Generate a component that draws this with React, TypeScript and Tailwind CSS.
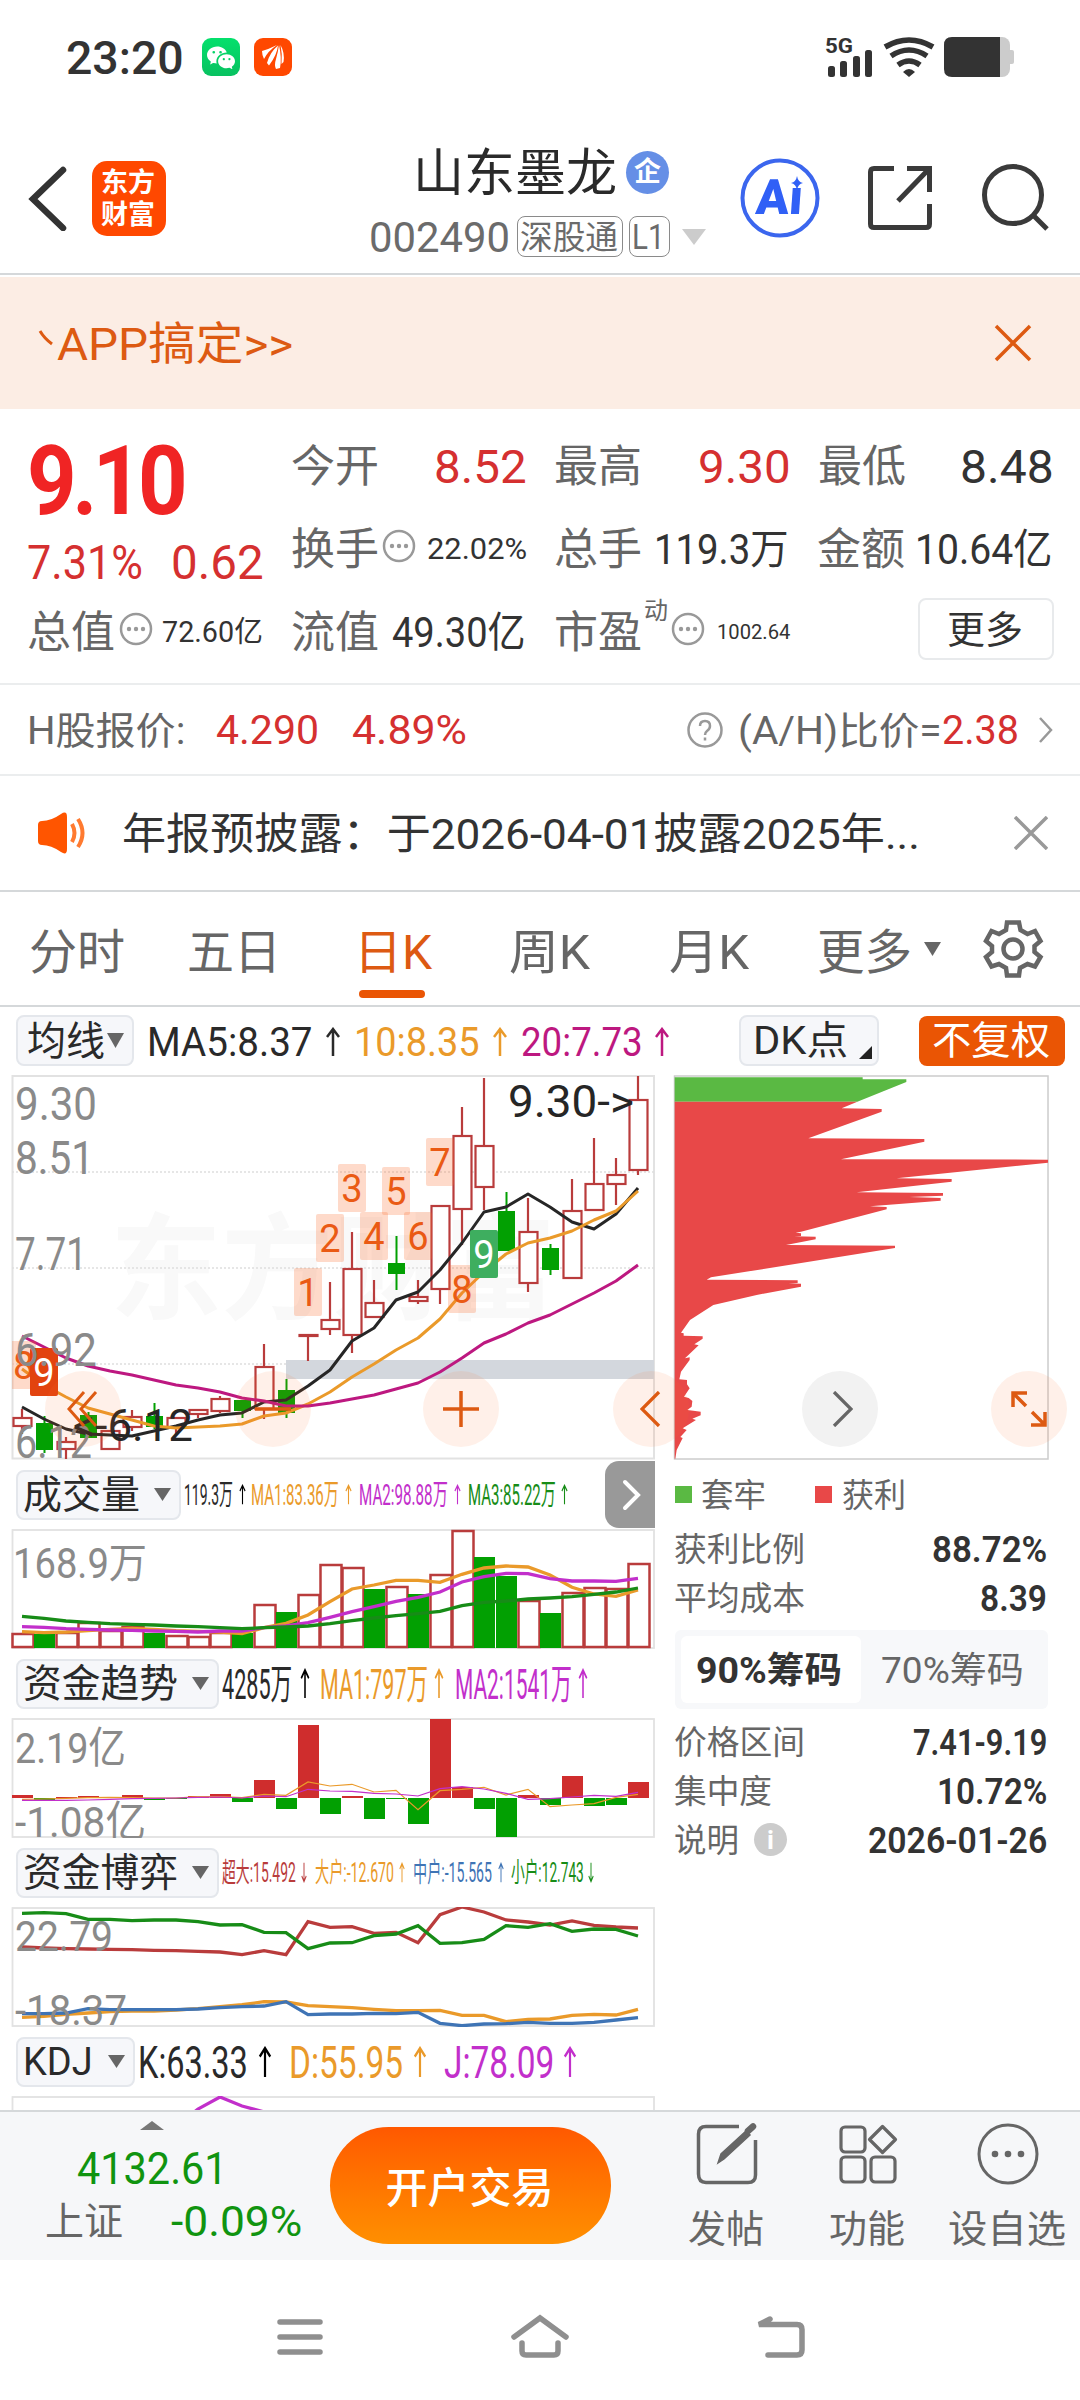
// App.tsx
//
// Stock detail page: quote header, daily K chart, indicator panes and chip distribution.

import { useLayoutEffect, useRef, useState } from "react"
import type { ReactNode } from "react"
import { BsWechat } from "react-icons/bs"

// Single line text that is squeezed (or stretched) to the width of its box.
function Fit({ className = "", children }: { className?: string; children: ReactNode }) {
  const box = useRef<HTMLSpanElement>(null)
  const inner = useRef<HTMLSpanElement>(null)
  const [k, setK] = useState(1)

  useLayoutEffect(() => {
    if (!box.current || !inner.current) return
    setK(box.current.clientWidth / inner.current.offsetWidth)
  }, [children])

  return (
    <span ref={box} className={`block shrink-0 leading-none ${className}`}>
      <span
        ref={inner}
        className="block w-max origin-left whitespace-nowrap"
        style={{ transform: `translate(-1px, 1px) scaleX(${k})` }}
      >
        {children}
      </span>
    </span>
  )
}

const X0 = 22
const STEP = 22

// one y value per candle
function line(ys: number[], base = 0, div = 1) {
  return ys.map((y, i) => `${X0 + i * STEP},${(base + y / div).toFixed(1)}`).join(" ")
}

// [high, body top, body bottom, low, up?]
const CANDLES: [number, number, number, number, boolean][] = [
  [1409, 1418, 1426, 1434, true],
  [1416, 1423, 1450, 1453, false],
  [1437, 1442, 1449, 1459, true],
  [1412, 1415, 1438, 1438, false],
  [1431, 1431, 1449, 1449, true],
  [1410, 1417, 1427, 1431, true],
  [1403, 1416, 1427, 1429, false],
  [1418, 1418, 1427, 1435, true],
  [1410, 1410, 1414, 1418, true],
  [1396, 1399, 1411, 1413, true],
  [1400, 1400, 1411, 1418, false],
  [1344, 1367, 1409, 1419, true],
  [1379, 1390, 1413, 1418, false],
  [1335, 1335, 1336, 1361, true],
  [1282, 1320, 1329, 1335, true],
  [1232, 1269, 1335, 1353, true],
  [1280, 1303, 1317, 1318, true],
  [1236, 1263, 1274, 1290, false],
  [1280, 1297, 1301, 1304, true],
  [1206, 1206, 1289, 1304, true],
  [1107, 1136, 1209, 1245, true],
  [1078, 1146, 1187, 1210, true],
  [1192, 1211, 1251, 1251, false],
  [1198, 1232, 1283, 1292, true],
  [1244, 1248, 1270, 1275, false],
  [1179, 1211, 1278, 1278, true],
  [1138, 1184, 1210, 1210, true],
  [1158, 1175, 1184, 1205, true],
  [1076, 1100, 1170, 1175, true],
]

const MA5 = [1407, 1419, 1429, 1434, 1435, 1436, 1431, 1426, 1420, 1415, 1413, 1402, 1400, 1386, 1370, 1341, 1328, 1300, 1292, 1270, 1243, 1212, 1207, 1194, 1207, 1222, 1229, 1214, 1188]
const MA10 = [1369, 1385, 1397, 1408, 1414, 1420, 1426, 1428, 1427, 1426, 1424, 1416, 1413, 1404, 1392, 1377, 1364, 1350, 1338, 1319, 1293, 1272, 1254, 1243, 1238, 1231, 1220, 1211, 1191]
const MA20 = [1336, 1347, 1358, 1366, 1371, 1375, 1380, 1385, 1388, 1392, 1398, 1401, 1406, 1406, 1403, 1399, 1395, 1389, 1383, 1372, 1358, 1343, 1334, 1323, 1315, 1304, 1293, 1281, 1265]

const COUNTS: [string, number, number][] = [
  ["1", 294, 1268],
  ["2", 316, 1214],
  ["3", 338, 1164],
  ["4", 360, 1212],
  ["5", 382, 1167],
  ["6", 404, 1212],
  ["7", 426, 1138],
  ["8", 448, 1265],
]

const VOL_TOP = [1633, 1634, 1632, 1622, 1630, 1626, 1633, 1635, 1636, 1632, 1633, 1604, 1612, 1594, 1564, 1567, 1589, 1586, 1594, 1574, 1530, 1557, 1576, 1600, 1613, 1592, 1587, 1588, 1563]
const VOL_DOWN = [1, 6, 10, 12, 16, 18, 21, 22, 24]
const VOL_MA1 = [515, 518, 516, 512, 508, 505, 508, 512, 514, 516, 521, 503, 490, 465, 425, 387, 375, 361, 361, 367, 343, 324, 318, 321, 345, 382, 402, 409, 390]
const VOL_MA2 = [500, 502, 506, 508, 510, 511, 513, 514, 516, 513, 513, 503, 498, 488, 472, 455, 440, 424, 412, 396, 366, 350, 340, 341, 356, 363, 363, 364, 355]
const VOL_MA3 = [469, 475, 483, 487, 491, 493, 495, 498, 500, 503, 506, 503, 501, 498, 491, 482, 474, 467, 461, 454, 437, 427, 423, 417, 414, 410, 403, 396, 384]

const ZERO = 1798
const FLOW = [1795, 1801, 1797, 1796, 1797, 1795, 1800, 1799, 1796, 1794, 1802, 1780, 1809, 1725, 1814, 1796, 1819, 1799, 1824, 1719, 1787, 1809, 1837, 1795, 1805, 1776, 1806, 1805, 1782]
const FLOW_MA1 = [1018, 1017, 1015, 1013, 1012, 1013, 1014, 1014, 1010, 1010, 1013, 1003, 1006, 966, 978, 973, 996, 991, 1049, 992, 988, 982, 1005, 988, 1040, 1035, 1031, 1012, 1003]
const FLOW_MA2 = [1021, 1021, 1021, 1020, 1018, 1016, 1015, 1014, 1012, 1011, 1014, 1008, 1010, 988, 993, 994, 1000, 1002, 1008, 986, 980, 987, 1000, 1018, 1016, 1011, 1006, 1009, 997]

const GAME_SMALL = [250, 248, 251, 268, 268, 272, 270, 270, 275, 285, 284, 307, 308, 356, 339, 338, 317, 312, 287, 340, 338, 328, 287, 292, 281, 304, 297, 298, 318]
const GAME_HUGE = [351, 354, 356, 357, 358, 359, 361, 362, 364, 366, 374, 362, 374, 275, 292, 290, 310, 307, 338, 254, 231, 246, 270, 276, 285, 273, 286, 291, 294]
const GAME_BIG = [562, 559, 553, 549, 545, 543, 543, 540, 536, 530, 524, 515, 516, 527, 530, 533, 538, 542, 542, 541, 556, 556, 575, 568, 567, 556, 553, 555, 538]
const GAME_MID = [551, 551, 549, 536, 539, 539, 539, 539, 537, 533, 530, 528, 515, 554, 552, 552, 550, 551, 547, 580, 587, 582, 581, 577, 580, 580, 577, 570, 563]

// outline of the chip distribution, x and y in thirds of a pixel
const CHIPS =
  "74,95 622,95 575,115 695,117 695,125 475,205 823,207 823,215 573,268 1194,269 1194,278 740,325 905,327 905,335 620,367 879,369 879,377 778,381 872,384 872,392 660,409 710,411 710,418 453,485 437,488 453,490 453,498 432,499 497,500 497,508 408,525 735,527 735,534 183,622 170,629 443,631 443,639 415,640 453,641 453,650 320,675 190,705 120,750 93,788 101,790 101,797 158,799 158,806 133,823 146,826 105,865 119,862 119,870 93,905 88,928 111,930 111,943 119,955 102,980 116,984 127,993 125,1010 112,1020 130,1022 152,1025 152,1036 127,1046 138,1050 98,1075 110,1080 91,1101 98,1104 80,1140 76,1166 74,1166"

function StatusBar() {
  return (
    <div className="flex h-[114px] items-center pl-[67px]">
      <Fit className="w-[118px] text-[46px] font-medium text-[#333]">23:20</Fit>
      <div className="ml-[17px] flex h-[38px] w-[38px] items-center justify-center rounded-[9px] bg-gradient-to-b from-[#04e06c] to-[#08c160]">
        <BsWechat className="h-[28px] w-[28px] text-white" />
      </div>
      <svg className="ml-[14px] h-[38px] w-[38px]" viewBox="0 0 38 38">
        <rect width="38" height="38" rx="9" fill="#ff4800" />
        <path d="M8 13Q15 11 23 7Q14 13 10 21Q8 17 8 13zM13 25Q16 14 24 7.500Q23 17 15 27.500zM22 31Q20 27 22 21Q24 14 25 7Q28 20 26 30zM26.500 7Q31 15 29.500 24L27.500 26Q28.500 16 26.500 7z" fill="#fff" />
      </svg>
      <svg className="ml-[530px] h-[44px] w-[192px]" viewBox="822 35 192 44">
        <text x="825" y="53" fontSize="20" fontWeight="700" fill="#333" textLength="28" lengthAdjust="spacingAndGlyphs">5G</text>
        <g fill="#333">
          <rect x="828" y="66" width="7" height="11" rx="2.5" />
          <rect x="840" y="61" width="7" height="16" rx="2.5" />
          <rect x="853" y="56" width="7" height="21" rx="2.5" />
          <rect x="865" y="50" width="7" height="27" rx="2.5" />
          <path d="M909 77l-6-5q6-6 12 0z" />
        </g>
        <g fill="none" stroke="#333" strokeWidth="5.5">
          <path d="M885 47q24-14 48 0" />
          <path d="M891 56q18-12 36 0" />
          <path d="M898 65q11-8 22 0" />
        </g>
        <rect x="985" y="37" width="25" height="40" rx="8" fill="#ccc" />
        <rect x="1008" y="50" width="6" height="14" rx="2" fill="#ccc" />
        <path d="M952 37h48v40h-48q-8 0-8-8v-24q0-8 8-8z" fill="#333" />
      </svg>
    </div>
  )
}

function Header() {
  return (
    <header className="flex h-[161px] items-center border-b-2 border-[#d5d8da] pb-[9px]">
      <svg className="ml-[26px] mt-[17px] h-[66px] w-[44px]" viewBox="26 166 44 66" fill="none" stroke="#333" strokeWidth="6.500">
        <path d="M63 171L33 200L63 229" strokeLinecap="round" />
      </svg>
      <div className="ml-[22px] mt-[19px] flex h-[75px] w-[74px] flex-col items-center justify-center gap-[5px] rounded-[15px] bg-[#ff4800] font-bold text-white">
        <Fit className="w-[54px] text-[27px]">东方</Fit>
        <Fit className="w-[54px] text-[27px]">财富</Fit>
      </div>
      <div className="ml-[204px] mt-[27px] w-[340px]">
        <div className="flex items-center pl-[44px]">
          <Fit className="w-[204px] text-[51px] text-[#2a2a2a]">山东墨龙</Fit>
          <span className="ml-[8px] flex h-[43px] w-[43px] items-center justify-center rounded-full bg-[#658fe6] text-[27px] font-bold leading-none text-white">企</span>
        </div>
        <div className="mt-[17px] flex items-center text-[#6b6b6b]">
          <Fit className="w-[141px] text-[43px]">002490</Fit>
          <span className="ml-[6px] flex h-[41px] w-[106px] items-center justify-center rounded-[8px] border-[1.5px] border-[#8a8a8a]">
            <Fit className="w-[98px] text-[33px]">深股通</Fit>
          </span>
          <span className="ml-[6px] flex h-[41px] w-[41px] items-center justify-center rounded-[8px] border-[1.5px] border-[#8a8a8a]">
            <Fit className="w-[33px] text-[35px]">L1</Fit>
          </span>
          <svg className="ml-[12px] h-[16px] w-[24px]" viewBox="0 0 24 16">
            <path d="M0 0h24L12 16z" fill="#ccc" />
          </svg>
        </div>
      </div>
      <svg className="ml-[29px] mt-[18px] h-[82px] w-[82px]" viewBox="739 158 82 82">
        <circle cx="780" cy="199" r="37.5" fill="none" stroke="#3b66ee" strokeWidth="4" />
        <path d="M797 177q1 6 6 7q-5 1-6 7q-1-6-6-7q5-1 6-7z" fill="#3060f6" />
        <text transform="translate(755 215) skewX(-4)" fontSize="49" fontWeight="900" fill="#3060f6" textLength="47" lengthAdjust="spacingAndGlyphs">Aı</text>
      </svg>
      <svg className="ml-[44px] mt-[17px] h-[70px] w-[72px]" viewBox="864 164 72 70" fill="none" stroke="#3a3a3a" strokeWidth="5">
        <path d="M893 169.500H873q-3.500 0-3.500 3.500V225q0 3.500 3.500 3.500H925q3.500 0 3.500-3.500V205M906 169.500H928.500V193M927 171L897 202" />
      </svg>
      <svg className="ml-[42px] mt-[17px] h-[70px] w-[72px]" viewBox="978 164 72 70" fill="none" stroke="#3a3a3a" strokeWidth="5">
        <circle cx="1012" cy="196" r="28.500" />
        <path d="M1032 216L1046 230" />
      </svg>
    </header>
  )
}

function Dots() {
  return (
    <svg className="h-[34px] w-[34px] shrink-0" viewBox="0 0 34 34">
      <circle cx="17" cy="17" r="15" fill="none" stroke="#999" strokeWidth="2.500" />
      <g fill="#999">
        <circle cx="10" cy="17" r="2.200" />
        <circle cx="17" cy="17" r="2.200" />
        <circle cx="24" cy="17" r="2.200" />
      </g>
    </svg>
  )
}

function Quote() {
  return (
    <section className="h-[276px] border-b-2 border-[#ebedee] pt-[15px] text-[#666]">
      <div className="flex">
        <div className="w-[292px] pl-[28px]">
          <div className="flex h-[110px] items-center pt-[2px]">
            <Fit className="w-[156px] text-[96px] font-bold tracking-[-5px] text-[#f02424]">9.10</Fit>
          </div>
          <div className="flex h-[56px] items-center text-[48px] text-[#d53030]">
            <Fit className="w-[116px]">7.31%</Fit>
            <Fit className="ml-[28px] w-[93px]">0.62</Fit>
          </div>
        </div>
        <div className="flex flex-col">
          <div className="flex h-[83px] items-center text-[44px]">
            <Fit className="w-[88px]">今开</Fit>
            <Fit className="ml-[55px] w-[93px] text-[47px] text-[#d53030]">8.52</Fit>
            <Fit className="ml-[27px] w-[88px]">最高</Fit>
            <Fit className="ml-[56px] w-[93px] text-[47px] text-[#d53030]">9.30</Fit>
            <Fit className="ml-[27px] w-[88px]">最低</Fit>
            <Fit className="ml-[54px] w-[94px] text-[47px] text-[#333]">8.48</Fit>
          </div>
          <div className="flex h-[83px] items-center text-[44px]">
            <Fit className="w-[88px]">换手</Fit>
            <span className="ml-[2px] flex pb-[6px]"><Dots /></span>
            <Fit className="ml-[12px] w-[100px] text-[29px] text-[#333]">22.02%</Fit>
            <Fit className="ml-[27px] w-[88px]">总手</Fit>
            <Fit className="ml-[12px] w-[135px] text-[42px] text-[#333]">119.3万</Fit>
            <Fit className="ml-[28px] w-[88px]">金额</Fit>
            <Fit className="ml-[10px] w-[138px] text-[42px] text-[#333]">10.64亿</Fit>
          </div>
        </div>
      </div>
      <div className="flex h-[83px] items-center pl-[28px] text-[44px]">
        <Fit className="w-[88px]">总值</Fit>
        <span className="ml-[3px] flex pb-[6px]"><Dots /></span>
        <Fit className="ml-[10px] w-[101px] text-[29px] text-[#333]">72.60亿</Fit>
        <Fit className="ml-[28px] w-[88px]">流值</Fit>
        <Fit className="ml-[13px] w-[134px] text-[42px] text-[#333]">49.30亿</Fit>
        <Fit className="ml-[28px] w-[88px]">市盈</Fit>
        <Fit className="mb-[44px] ml-[2px] w-[24px] text-[24px]">动</Fit>
        <span className="ml-[2px] flex pb-[6px]"><Dots /></span>
        <Fit className="ml-[13px] w-[73px] text-[21px] text-[#333]">1002.64</Fit>
        <button className="mb-[5px] ml-[127px] flex h-[62px] w-[136px] items-center justify-center rounded-[8px] border-2 border-[#e8eaec]">
          <Fit className="w-[76px] text-[38px] text-[#333]">更多</Fit>
        </button>
      </div>
    </section>
  )
}

function HShare() {
  return (
    <section className="flex h-[91px] items-center border-b-2 border-[#ebedee] text-[38px] text-[#666]">
      <Fit className="ml-[28px] w-[158px]">H股报价:</Fit>
      <Fit className="ml-[31px] w-[103px] text-[41px] text-[#d53030]">4.290</Fit>
      <Fit className="ml-[33px] w-[115px] text-[41px] text-[#d53030]">4.89%</Fit>
      <svg className="ml-[218px] h-[38px] w-[38px]" viewBox="0 0 38 38" fill="none" stroke="#999" strokeWidth="2.500">
        <circle cx="19" cy="19" r="16.500" />
        <path d="M14 15q0-5 5-5t5 5q0 3-3 5q-2 1.500-2 4M19 26.500v3" />
      </svg>
      <Fit className="ml-[15px] w-[204px]">(A/H)比价=</Fit>
      <Fit className="w-[77px] text-[41px] text-[#d53030]">2.38</Fit>
      <svg className="ml-[18px] h-[30px] w-[16px]" viewBox="0 0 16 30" fill="none" stroke="#999" strokeWidth="2.500">
        <path d="M2 3L13 15L2 27" />
      </svg>
    </section>
  )
}

function Notice() {
  return (
    <section className="flex h-[116px] items-center border-b-2 border-[#d5d8da]">
      <svg className="ml-[34px] h-[46px] w-[54px]" viewBox="34 810 54 46">
        <path d="M42 821Q51 821 61 814q6-4 6 3v32q0 7-6 3Q51 845 42 845q-4 0-4-4v-16q0-4 4-4z" fill="#ff5500" />
        <path d="M72 824q5 9 0 18M78 819q9 14 0 28" fill="none" stroke="#ff7a30" strokeWidth="4" />
      </svg>
      <Fit className="ml-[35px] w-[798px] text-[43px] text-[#333]">年报预披露：于2026-04-01披露2025年...</Fit>
      <svg className="ml-[93px] h-[34px] w-[34px]" viewBox="0 0 34 34" stroke="#999" strokeWidth="3.500">
        <path d="M1 1L33 33M33 1L1 33" />
      </svg>
    </section>
  )
}

function Tabs() {
  return (
    <nav className="flex h-[115px] items-center border-b-2 border-[#d5d8da] text-[48px] text-[#666]">
      <Fit className="ml-[30px] mt-[6px] w-[96px]">分时</Fit>
      <Fit className="ml-[62px] mt-[6px] w-[94px]">五日</Fit>
      <span className="ml-[73px] flex h-full flex-col items-center pt-[36px] text-[#dd5a12]">
        <Fit className="w-[78px]">日K</Fit>
        <span className="mt-[14px] h-[8px] w-[66px] -translate-x-[2px] rounded-full bg-[#ea5504]" />
      </span>
      <Fit className="ml-[77px] mt-[6px] w-[81px]">周K</Fit>
      <Fit className="ml-[79px] mt-[6px] w-[80px]">月K</Fit>
      <Fit className="ml-[68px] mt-[6px] w-[95px]">更多</Fit>
      <svg className="ml-[11px] h-[14px] w-[17px]" viewBox="0 0 17 14">
        <path d="M0 0h17L8.500 14z" fill="#666" />
      </svg>
      <svg className="ml-[30px] mt-[2px] h-[90px] w-[90px]" viewBox="1 0 90 90" fill="none" stroke="#666" strokeWidth="4.500">
        <path d="M37 17.500H49L50.500 25L57.500 29L65 26L70.500 36L64.500 41V47L70.500 52L65 61.500L57.500 59L50 63L49 70.500H37L36 63L29 59L21.500 61.500L16 52L22 47V41L16 36L21.500 26L29 29L36 25Z" />
        <circle cx="43" cy="44" r="9.500" />
      </svg>
    </nav>
  )
}

function Arrow({ className = "", down = false }: { className?: string; down?: boolean }) {
  return (
    <svg className={`shrink-0 ${className}`} viewBox="0 0 16 30" preserveAspectRatio="none" fill="none" stroke="currentColor" strokeWidth="2.500">
      {down ? <path d="M8 1V28M2 20L8 28L14 20" /> : <path d="M8 29V2M2 10L8 2L14 10" />}
    </svg>
  )
}

function MaBar() {
  return (
    <div className="flex h-[67px] items-center text-[40px] text-[#2a2a2a]">
      <button className="ml-[16px] flex h-[51px] w-[118px] items-center rounded-[8px] border-2 border-[#e4e7ec] bg-[#f6f7fa] pl-[10px]">
        <Fit className="w-[78px]">均线</Fit>
        <svg className="ml-[1px] h-[15px] w-[17px]" viewBox="0 0 17 15">
          <path d="M0 0h17L8.500 15z" fill="#666" />
        </svg>
      </button>
      <Fit className="ml-[14px] mt-[3px] w-[166px]">MA5:8.37</Fit>
      <Arrow className="ml-[11px] mt-[3px] h-[30px] w-[16px]" />
      <Fit className="ml-[14px] mt-[3px] w-[126px] text-[#ea9a2a]">10:8.35</Fit>
      <Arrow className="ml-[11px] mt-[3px] h-[30px] w-[16px] text-[#ea9a2a]" />
      <Fit className="ml-[14px] mt-[3px] w-[122px] text-[#bd1880]">20:7.73</Fit>
      <Arrow className="ml-[10px] mt-[3px] h-[30px] w-[16px] text-[#bd1880]" />
      <button className="relative ml-[69px] flex h-[51px] w-[140px] items-center rounded-[8px] border-2 border-[#e4e7ec] bg-[#f6f7fa] pl-[13px]">
        <Fit className="w-[95px] text-[39px]">DK点</Fit>
        <svg className="absolute bottom-[5px] right-[5px] h-[13px] w-[13px]" viewBox="0 0 13 13">
          <path d="M13 0v13H0z" fill="#222" />
        </svg>
      </button>
      <button className="ml-[40px] flex h-[50px] w-[146px] items-center justify-center rounded-[8px] bg-[#ea5504] text-white">
        <Fit className="w-[118px] text-[39px]">不复权</Fit>
      </button>
    </div>
  )
}

function KChart() {
  return (
    <div className="relative h-[386px]">
      <svg className="block h-[387px] w-[1080px]" viewBox="0 1074 1080 387">
        <rect x="12.500" y="1076" width="641.500" height="382.500" fill="#fff" stroke="#e2e2e2" strokeWidth="2" />
        <text x="110" y="1310" fontSize="115" fontWeight="700" fill="#f9f9f9" textLength="446" lengthAdjust="spacingAndGlyphs">东方财富</text>
        <g stroke="#dedede" strokeWidth="1.500" strokeDasharray="2 2">
          <path d="M12 1172H654M12 1268H654M12 1364H654" />
        </g>
        <rect x="286" y="1360" width="368" height="19" fill="#d3d7dd" />

        {CANDLES.map(([hi, top, bottom, lo, up], i) => {
          const x = X0 + i * STEP
          return up ? (
            <g key={i} stroke="#b93c3c" strokeWidth="2.200" fill="#fff">
              <path d={`M${x} ${hi}V${top}M${x} ${bottom}V${lo}`} />
              <rect x={x - 8.500} y={top} width="18" height={bottom - top} fill={i === 13 ? "none" : "#fff"} />
            </g>
          ) : (
            <g key={i} fill="#02a002">
              <rect x={x - 0.500} y={hi} width="2" height={lo - hi} />
              <rect x={x - 8} y={top} width="17" height={bottom - top} />
            </g>
          )
        })}

        <g fill="none" strokeWidth="3" strokeLinejoin="round">
          <polyline points={line(MA5)} stroke="#262626" />
          <polyline points={line(MA10)} stroke="#ea9a2a" />
          <polyline points={line(MA20)} stroke="#bd1880" />
        </g>

        <g fontSize="38" fill="#ea5a14">
          {COUNTS.map(([n, x, y]) => (
            <g key={n}>
              <rect x={x} y={y} width="28" height="48" rx="2" fill="#fa6a2a" fillOpacity="0.250" />
              <text x={x + 14} y={y + 38} textAnchor="middle">{n}</text>
            </g>
          ))}
          <rect x="12" y="1341" width="24" height="48" fill="#fa6a2a" fillOpacity="0.250" />
          <text x="13" y="1379">8</text>
          <rect x="470" y="1230" width="28" height="48" rx="2" fill="#3eae5f" />
          <text x="484" y="1268" textAnchor="middle" fill="#fff">9</text>
          <rect x="30" y="1348" width="28" height="48" rx="2" fill="#e2430f" />
          <text x="44" y="1386" textAnchor="middle" fill="#fff">9</text>
        </g>

        <g fontSize="46" fill="#8a8a8a">
          <text x="15" y="1120" textLength="82" lengthAdjust="spacingAndGlyphs">9.30</text>
          <text x="15" y="1174" textLength="79" lengthAdjust="spacingAndGlyphs">8.51</text>
          <text x="15" y="1270" textLength="72" lengthAdjust="spacingAndGlyphs">7.71</text>
          <text x="15" y="1366" textLength="82" lengthAdjust="spacingAndGlyphs">6.92</text>
          <text x="15" y="1458" textLength="77" lengthAdjust="spacingAndGlyphs">6.12</text>
        </g>
        <g fontSize="45" fill="#262626">
          <text x="73" y="1441" textLength="120" lengthAdjust="spacingAndGlyphs">&lt;-6.12</text>
          <text x="508" y="1117" textLength="126" lengthAdjust="spacingAndGlyphs">9.30-&gt;</text>
        </g>

        <rect x="674.500" y="1076" width="373.500" height="383" fill="#fff" stroke="#ccc" strokeWidth="1.500" />
        <g transform="translate(650 1070) scale(0.33333)">
          <path d="M74 22H638V28H769V36L622 95H74z" fill="#5ab943" />
          <polygon points={CHIPS} fill="#e84848" />
        </g>
      </svg>

      {/* floating chart controls */}
      <button className="absolute left-[45px] top-[297px] flex h-[76px] w-[76px] items-center justify-center rounded-full bg-[#ff6a20]/10">
        <svg className="h-[36px] w-[32px]" viewBox="0 0 32 36" fill="none" stroke="#dd5a12" strokeWidth="3">
          <path d="M17 1L2 18L17 35M29 1L14 18L29 35" />
        </svg>
      </button>
      <button className="absolute left-[235px] top-[297px] flex h-[76px] w-[76px] items-center justify-center rounded-full bg-[#ff6a20]/10">
        <svg className="h-[4px] w-[36px]" viewBox="0 0 36 4">
          <path d="M0 2H36" stroke="#dd5a12" strokeWidth="3.500" />
        </svg>
      </button>
      <button className="absolute left-[423px] top-[297px] flex h-[76px] w-[76px] items-center justify-center rounded-full bg-[#ff6a20]/10">
        <svg className="h-[36px] w-[36px]" viewBox="0 0 36 36" stroke="#dd5a12" strokeWidth="3.500">
          <path d="M0 18H36M18 0V36" />
        </svg>
      </button>
      <button className="absolute left-[613px] top-[297px] flex h-[76px] w-[76px] items-center justify-center rounded-full bg-[#ff6a20]/10">
        <svg className="h-[36px] w-[22px]" viewBox="0 0 22 36" fill="none" stroke="#dd5a12" strokeWidth="3.300">
          <path d="M19 1L2 18L19 35" />
        </svg>
      </button>
      <button className="absolute left-[802px] top-[297px] flex h-[76px] w-[76px] items-center justify-center rounded-full bg-[#f2f2f2]">
        <svg className="ml-[4px] h-[36px] w-[22px]" viewBox="0 0 22 36" fill="none" stroke="#666" strokeWidth="3.300">
          <path d="M3 1L20 18L3 35" />
        </svg>
      </button>
      <button className="absolute left-[991px] top-[297px] flex h-[76px] w-[76px] items-center justify-center rounded-full bg-[#ff6a20]/10">
        <svg className="h-[38px] w-[38px]" viewBox="0 0 38 38" fill="none" stroke="#dd5a12" strokeWidth="3.500">
          <path d="M17 3H3V17M3 3L16 16M35 22V35H21M35 35L22 22" />
        </svg>
      </button>
    </div>
  )
}

function PaneSelect({ label, w, textW }: { label: string; w: string; textW: string }) {
  return (
    <button className={`ml-[16px] flex h-[50px] shrink-0 items-center justify-between rounded-[8px] border-2 border-[#e4e7ec] bg-[#f6f7fa] pl-[6px] pr-[8px] text-[39px] text-[#2a2a2a] ${w}`}>
      <Fit className={textW}>{label}</Fit>
      <svg className="h-[13px] w-[17px]" viewBox="0 0 17 13">
        <path d="M0 0h17L8.500 13z" fill="#666" />
      </svg>
    </button>
  )
}

function PaneFrame({ y, children }: { y: number; children: ReactNode }) {
  return (
    <svg className="block h-[120px] w-[660px]" viewBox={`0 ${y} 660 120`}>
      <rect x="12.500" y={y + 1} width="641.500" height="118" fill="#fff" stroke="#e2e2e2" strokeWidth="1.800" />
      {children}
    </svg>
  )
}

function VolumePane() {
  return (
    <>
      <div className="relative flex h-[69px] items-center">
        <PaneSelect label="成交量" w="w-[165px]" textW="w-[117px]" />
        <Fit className="ml-[4px] w-[49px] text-[29px] text-[#2a2a2a]">119.3万</Fit>
        <Arrow className="ml-[5px] h-[21px] w-[7px]" />
        <Fit className="ml-[6px] w-[88px] text-[29px] text-[#ea9a2a]">MA1:83.36万</Fit>
        <Arrow className="ml-[5px] h-[21px] w-[7px] text-[#ea9a2a]" />
        <Fit className="ml-[8px] w-[89px] text-[29px] text-[#c22fcb]">MA2:98.88万</Fit>
        <Arrow className="ml-[5px] h-[21px] w-[7px] text-[#c22fcb]" />
        <Fit className="ml-[8px] w-[88px] text-[29px] text-[#178c17]">MA3:85.22万</Fit>
        <Arrow className="ml-[4px] h-[21px] w-[7px] text-[#178c17]" />
        <button className="absolute left-[605px] top-[1px] flex h-[67px] w-[50px] items-center justify-center rounded-l-[14px] bg-[#999]">
          <svg className="ml-[4px] h-[32px] w-[20px]" viewBox="0 0 20 32" fill="none" stroke="#fff" strokeWidth="4" strokeLinecap="round">
            <path d="M3 3L16 16L3 29" />
          </svg>
        </button>
      </div>
      <PaneFrame y={1529}>
        {VOL_TOP.map((t, i) => {
          const x = 12 + i * STEP
          return VOL_DOWN.includes(i) ? (
            <rect key={i} x={x} y={t} width="21" height={1648 - t} fill="#02a002" />
          ) : (
            <rect key={i} x={x + 0.500} y={t + 1} width="21" height={1646 - t} fill="#fff" stroke="#b93c3c" strokeWidth="2.500" />
          )
        })}
        <g fill="none" strokeWidth="3.300">
          <polyline points={line(VOL_MA1, 1460, 3)} stroke="#ea9a2a" />
          <polyline points={line(VOL_MA2, 1460, 3)} stroke="#c22fcb" />
          <polyline points={line(VOL_MA3, 1460, 3)} stroke="#178c17" />
        </g>
        <text x="13" y="1578" fontSize="42" fill="#8a8a8a" textLength="134" lengthAdjust="spacingAndGlyphs">168.9万</text>
      </PaneFrame>
    </>
  )
}

function FlowPane() {
  return (
    <>
      <div className="flex h-[69px] items-center text-[42px]">
        <PaneSelect label="资金趋势" w="w-[203px]" textW="w-[155px]" />
        <Fit className="ml-[4px] w-[70px] text-[#2a2a2a]">4285万</Fit>
        <Arrow className="ml-[7px] h-[31px] w-[10px]" />
        <Fit className="ml-[11px] w-[108px] text-[#ea9a2a]">MA1:797万</Fit>
        <Arrow className="ml-[5px] h-[31px] w-[10px] text-[#ea9a2a]" />
        <Fit className="ml-[12px] w-[117px] text-[#c22fcb]">MA2:1541万</Fit>
        <Arrow className="ml-[5px] h-[31px] w-[10px] text-[#c22fcb]" />
      </div>
      <PaneFrame y={1718}>
        <g fontSize="43" fill="#8a8a8a">
          <text x="15" y="1763" textLength="111" lengthAdjust="spacingAndGlyphs">2.19亿</text>
          <text x="15" y="1837" textLength="131" lengthAdjust="spacingAndGlyphs">-1.08亿</text>
        </g>
        {FLOW.map((v, i) => (
          <rect
            key={i}
            x={12 + i * STEP}
            y={Math.min(v, ZERO)}
            width="21"
            height={Math.max(Math.abs(v - ZERO), 1)}
            fill={v < ZERO ? "#cf2d2d" : "#02a002"}
          />
        ))}
        <g fill="none" strokeWidth="1.200">
          <polyline points={line(FLOW_MA1, 1460, 3)} stroke="#ea9a2a" />
          <polyline points={line(FLOW_MA2, 1460, 3)} stroke="#c22fcb" />
        </g>
      </PaneFrame>
    </>
  )
}

function GamePane() {
  return (
    <>
      <div className="flex h-[69px] items-center text-[27px]">
        <PaneSelect label="资金博弈" w="w-[203px]" textW="w-[155px]" />
        <Fit className="ml-[4px] w-[74px] text-[#b93c3c]">超大:15.492</Fit>
        <Arrow down className="ml-[4px] h-[21px] w-[6px] text-[#b93c3c]" />
        <Fit className="ml-[9px] w-[79px] text-[#ea9a2a]">大户:-12.670</Fit>
        <Arrow className="ml-[4px] h-[21px] w-[6px] text-[#ea9a2a]" />
        <Fit className="ml-[9px] w-[79px] text-[#3f74b5]">中户:-15.565</Fit>
        <Arrow className="ml-[5px] h-[21px] w-[6px] text-[#3f74b5]" />
        <Fit className="ml-[8px] w-[73px] text-[#178c17]">小户:12.743</Fit>
        <Arrow down className="ml-[3px] h-[21px] w-[6px] text-[#178c17]" />
      </div>
      <PaneFrame y={1907}>
        <g fill="none" strokeWidth="3.300">
          <polyline points={line(GAME_HUGE, 1830, 3)} stroke="#b93c3c" />
          <polyline points={line(GAME_SMALL, 1830, 3)} stroke="#178c17" />
          <polyline points={line(GAME_BIG, 1830, 3)} stroke="#ea9a2a" />
          <polyline points={line(GAME_MID, 1830, 3)} stroke="#3f74b5" />
        </g>
        <g fontSize="42" fill="#8a8a8a">
          <text x="15" y="1951" textLength="98" lengthAdjust="spacingAndGlyphs">22.79</text>
          <text x="15" y="2025" textLength="112" lengthAdjust="spacingAndGlyphs">-18.37</text>
        </g>
      </PaneFrame>
    </>
  )
}

function KdjPane() {
  return (
    <>
      <div className="flex h-[69px] items-center text-[44px]">
        <PaneSelect label="KDJ" w="w-[119px]" textW="w-[70px]" />
        <Fit className="ml-[4px] w-[110px] text-[#2a2a2a]">K:63.33</Fit>
        <Arrow className="ml-[9px] h-[32px] w-[14px]" />
        <Fit className="ml-[18px] w-[114px] text-[#ea9a2a]">D:55.95</Fit>
        <Arrow className="ml-[9px] h-[32px] w-[14px] text-[#ea9a2a]" />
        <Fit className="ml-[18px] w-[110px] text-[#c22fcb]">J:78.09</Fit>
        <Arrow className="ml-[8px] h-[32px] w-[14px] text-[#c22fcb]" />
      </div>
      <PaneFrame y={2096}>
        <polyline points="192,2114 198,2109 220,2097 242,2106 268,2113" fill="none" stroke="#c22fcb" strokeWidth="3.300" />
      </PaneFrame>
    </>
  )
}

function ChipRow({ label, value, w, lw, info }: { label: string; value: string; w: string; lw: string; info?: boolean }) {
  return (
    <div className="flex h-[49px] items-center text-[33px] text-[#666]">
      <Fit className={lw}>{label}</Fit>
      {info && (
        <span className="ml-[14px] flex h-[33px] w-[33px] items-center justify-center rounded-full bg-[#ccc] text-[26px] font-bold leading-none text-white">i</span>
      )}
      <span className="flex-1" />
      <Fit className={`text-[37px] font-semibold text-[#333] ${w}`}>{value}</Fit>
    </div>
  )
}

function ChipPanel() {
  return (
    <aside className="w-[420px] pl-[15px] pr-[32px] pt-[9px]">
      <div className="flex h-[50px] items-center text-[33px] text-[#666]">
        <span className="h-[17px] w-[17px] bg-[#5ab943]" />
        <Fit className="ml-[10px] w-[65px]">套牢</Fit>
        <span className="ml-[48px] h-[17px] w-[17px] bg-[#e84848]" />
        <Fit className="ml-[11px] w-[64px]">获利</Fit>
      </div>
      <div className="mt-[5px]">
        <ChipRow label="获利比例" value="88.72%" lw="w-[131px]" w="w-[115px]" />
        <ChipRow label="平均成本" value="8.39" lw="w-[131px]" w="w-[67px]" />
      </div>
      <div className="mt-[8px] flex h-[79px] items-center rounded-[6px] bg-[#f7f8fa] pl-[6px] text-[36px]">
        <span className="flex h-[67px] w-[180px] items-center justify-center rounded-[6px] bg-white font-bold text-[#333]">
          <Fit className="mr-[3px] w-[146px]">90%筹码</Fit>
        </span>
        <Fit className="ml-[21px] w-[143px] text-[#666]">70%筹码</Fit>
      </div>
      <div className="mt-[8px]">
        <ChipRow label="价格区间" value="7.41-9.19" lw="w-[131px]" w="w-[134px]" />
        <ChipRow label="集中度" value="10.72%" lw="w-[98px]" w="w-[110px]" />
        <ChipRow label="说明" value="2026-01-26" lw="w-[65px]" w="w-[179px]" info />
      </div>
    </aside>
  )
}

function BottomBar() {
  return (
    <footer className="flex h-[150px] border-t-2 border-[#d5d8da] bg-[#f6f7f9]">
      <div className="w-[330px] pt-[9px]">
        <svg className="ml-[140px] h-[9px] w-[24px]" viewBox="0 0 24 9">
          <path d="M12 0L24 9H0z" fill="#777" />
        </svg>
        <div className="mt-[14px] flex h-[46px] items-center">
          <Fit className="ml-[78px] w-[151px] text-[45px] text-[#109410]">4132.61</Fit>
        </div>
        <div className="mt-[8px] flex h-[46px] items-center">
          <Fit className="ml-[46px] w-[78px] text-[39px] text-[#666]">上证</Fit>
          <Fit className="ml-[48px] w-[131px] text-[42px] text-[#109410]">-0.09%</Fit>
        </div>
      </div>
      <button className="mt-[15px] flex h-[117px] w-[281px] items-center justify-center rounded-full bg-gradient-to-b from-[#ff5800] to-[#ff8f00] pt-[4px]">
        <Fit className="w-[168px] text-[42px] font-medium text-white">开户交易</Fit>
      </button>
      <div className="ml-[78px] mt-[9px] flex w-[76px] flex-col items-center gap-[22px]">
        <svg className="h-[66px] w-[66px]" viewBox="695 2121 66 66" fill="none" stroke="#666" strokeWidth="3.500">
          <path d="M740 2126.500H707q-7.500 0-7.500 7.500V2174q0 8.500 7.500 8.500H749q7.500 0 7.500-7.500V2140" />
          <path d="M719 2163L722 2154L747 2131L751 2135L725 2159z" fill="#666" strokeWidth="1.500" />
          <path d="M749 2131L754 2126.500" strokeWidth="6.500" strokeLinecap="round" />
        </svg>
        <Fit className="w-[76px] text-[38px] text-[#666]">发帖</Fit>
      </div>
      <div className="ml-[65px] mt-[9px] flex w-[76px] flex-col items-center gap-[22px]">
        <svg className="h-[66px] w-[66px]" viewBox="836 2121 66 66" fill="none" stroke="#666" strokeWidth="3.200">
          <rect x="842" y="2127" width="24" height="25" rx="4" />
          <rect x="842" y="2157" width="24" height="25" rx="4" />
          <rect x="872" y="2157" width="24" height="25" rx="4" />
          <path d="M883.500 2126.500L896.500 2139.500L883.500 2152.500L870.500 2139.500z" strokeLinejoin="round" />
        </svg>
        <Fit className="w-[76px] text-[38px] text-[#666]">功能</Fit>
      </div>
      <div className="ml-[43px] mt-[9px] flex w-[118px] flex-col items-center gap-[22px]">
        <svg className="h-[66px] w-[66px]" viewBox="976 2121 66 66">
          <circle cx="1009" cy="2154" r="29" fill="none" stroke="#666" strokeWidth="3" />
          <g fill="#666">
            <circle cx="996" cy="2154" r="3.300" />
            <circle cx="1009" cy="2154" r="3.300" />
            <circle cx="1022" cy="2154" r="3.300" />
          </g>
        </svg>
        <Fit className="w-[118px] text-[38px] text-[#666]">设自选</Fit>
      </div>
    </footer>
  )
}

function SystemNav() {
  return (
    <svg className="block h-[139px] w-[1080px]" viewBox="0 2260 1080 139" fill="none" stroke="#8f8f8f" strokeWidth="5.500" strokeLinecap="round">
      <path d="M280 2322H320M280 2337H320M280 2352H320" />
      <path d="M514 2337L540 2318L566 2337M522 2343V2351q0 4 4 4H554q4 0 4-4V2343" />
      <path d="M770 2319L759 2324.500H797q5 0 5 5V2350q0 5-5 5H768" />
    </svg>
  )
}

export default function App() {
  return (
    <div className="h-[2400px] w-[1080px] overflow-hidden bg-white font-['Roboto','Noto_Sans_CJK_SC',sans-serif]">
      <StatusBar />
      <Header />
      <div className="mt-[2px] flex h-[132px] items-center bg-[#fcede4] text-[#dd5a12]">
        <svg className="mb-[10px] ml-[38px] h-[18px] w-[18px]" viewBox="0 0 18 18">
          <path d="M2 2Q6 9 14 15" fill="none" stroke="#dd5a12" strokeWidth="3" />
        </svg>
        <Fit className="ml-[2px] w-[236px] text-[45px]">APP搞定&gt;&gt;</Fit>
        <svg className="ml-[700px] h-[38px] w-[38px]" viewBox="0 0 38 38" stroke="#dd5a12" strokeWidth="3.500">
          <path d="M2 2L36 36M36 2L2 36" />
        </svg>
      </div>
      <Quote />
      <HShare />
      <Notice />
      <Tabs />
      <MaBar />
      <KChart />
      <div className="flex h-[650px] overflow-hidden">
        <div className="w-[660px] shrink-0">
          <VolumePane />
          <FlowPane />
          <GamePane />
          <KdjPane />
        </div>
        <ChipPanel />
      </div>
      <BottomBar />
      <SystemNav />
    </div>
  )
}
